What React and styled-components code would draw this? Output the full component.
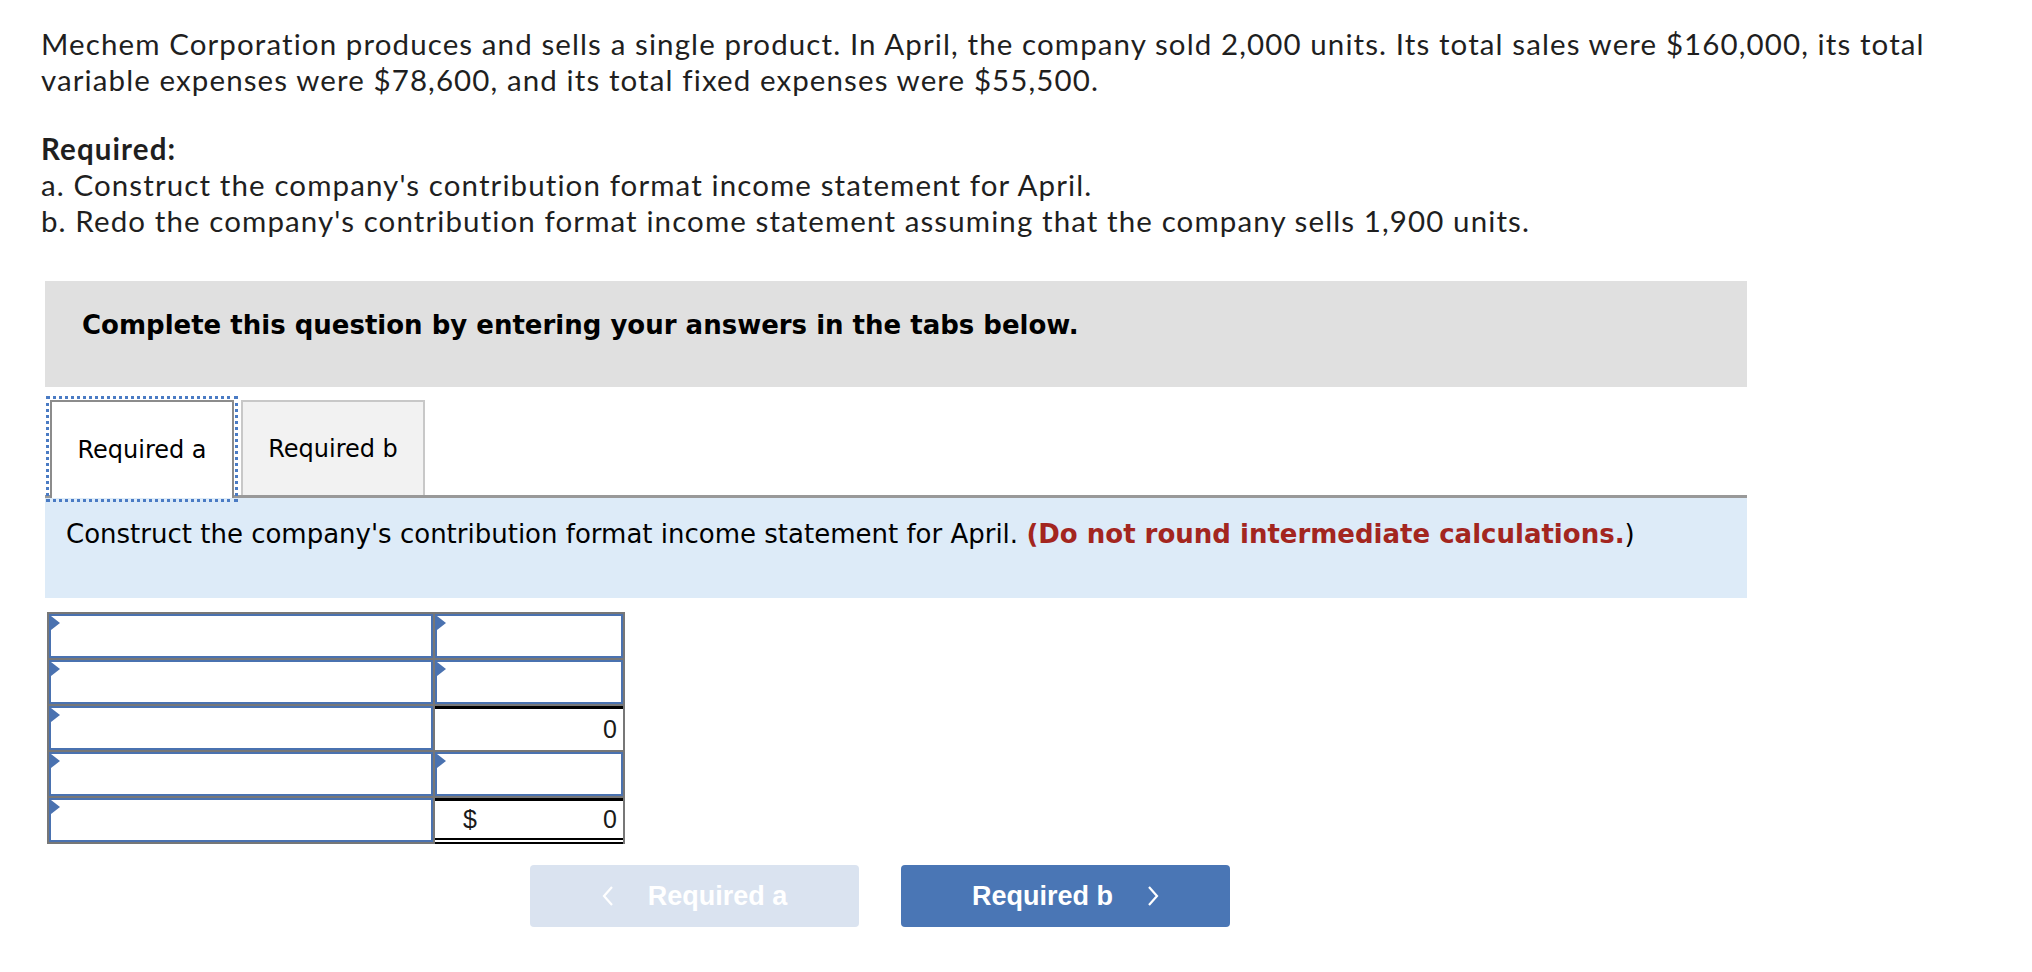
import styled, { createGlobalStyle } from "styled-components"

const Global = createGlobalStyle`
    body {
        margin: 0;
        background: #ffffff;
        color: #1f1f1f;
        font-family: Lato, "Noto Sans", sans-serif;
    }
`

const rows = [
    { label: "input", amount: "input" },
    { label: "input", amount: "input" },
    { label: "input", amount: "total" },
    { label: "input", amount: "input" },
    { label: "input", amount: "grand" },
]

export default function App() {
    return (
        <>
            <Global />
            <Page>
                <Question>
                    Mechem Corporation produces and sells a single product. In April, the company sold 2,000 units. Its total sales were $160,000, its total variable expenses were $78,600, and its total fixed expenses were $55,500.
                </Question>

                <Required>
                    <strong>Required:</strong>
                    <br />
                    a. Construct the company's contribution format income statement for April.
                    <br />
                    b. Redo the company's contribution format income statement assuming that the company sells 1,900 units.
                </Required>

                <Work>
                    <Banner>Complete this question by entering your answers in the tabs below.</Banner>

                    <Tabs>
                        <Tab $active>Required a</Tab>
                        <Tab>Required b</Tab>
                    </Tabs>

                    <Instruction>
                        Construct the company's contribution format income statement for April. <Warn>(Do not round intermediate calculations.</Warn>)
                    </Instruction>

                    <Sheet>
                        {rows.map((r, i) => (
                            <SheetRow key={i}>
                                <InputCell />
                                {r.amount === "input" && <InputCell />}
                                {r.amount === "total" && <TotalCell><span>0</span></TotalCell>}
                                {r.amount === "grand" && <TotalCell $double><span>$</span><span>0</span></TotalCell>}
                            </SheetRow>
                        ))}
                    </Sheet>

                    <Nav>
                        <NavButton disabled>
                            <Chevron viewBox="0 0 12 22"><polyline points="10,2 2,11 10,20" /></Chevron>
                            Required a
                        </NavButton>
                        <NavButton>
                            Required b
                            <Chevron viewBox="0 0 12 22"><polyline points="2,2 10,11 2,20" /></Chevron>
                        </NavButton>
                    </Nav>
                </Work>
            </Page>
        </>
    )
}

const Page = styled.div`
    padding: 26px 0 40px 41px;
`

const Question = styled.p`
    margin: 0;
    max-width: 1960px;
    font-size: 29.5px;
    letter-spacing: 1.1px;
    line-height: 36px;
`

const Required = styled.p`
    margin: 33px 0 0;
    font-size: 29.5px;
    letter-spacing: 1.1px;
    line-height: 36px;

    strong {
        font-weight: 700;
    }
`

const Work = styled.div`
    margin: 42px 0 0 4px;
    width: 1702px;
    font-family: "DejaVu Sans", Verdana, sans-serif;
    color: #000;
`

const Banner = styled.div`
    height: 106px;
    box-sizing: border-box;
    padding: 27px 37px;
    background: #e0e0e0;
    font-size: 26px;
    font-weight: 700;
    line-height: 34px;
`

const Tabs = styled.div`
    margin-top: 13px;
    display: flex;
    gap: 7px;
    padding-left: 5px;
    border-bottom: 3px solid #999999;
`

const Tab = styled.div`
    width: 184px;
    box-sizing: border-box;
    display: flex;
    align-items: center;
    justify-content: center;
    font-size: 24px;
    border: 2px solid ${p => (p.$active ? "#8c8c8c" : "#c8c8c8")};
    border-bottom: none;
    background: ${p => (p.$active ? "#ffffff" : "#f2f2f2")};
    margin-bottom: ${p => (p.$active ? "-3px" : "0")};
    height: ${p => (p.$active ? "98px" : "95px")};
    outline: ${p => (p.$active ? "3px dotted #4a7bc4" : "none")};
    outline-offset: 1px;
`

const Instruction = styled.div`
    height: 100px;
    box-sizing: border-box;
    padding: 19px 21px;
    background: #ddebf8;
    font-size: 26px;
    line-height: 34px;
`

const Warn = styled.strong`
    color: #a3261f;
    font-weight: 700;
`

const Sheet = styled.div`
    margin: 14px 0 0 2px;
    width: 578px;
    box-sizing: border-box;
    display: flex;
    flex-direction: column;
    gap: 2px;
    padding: 2px;
    background: #777777;
`

const SheetRow = styled.div`
    display: grid;
    grid-template-columns: 384px 188px;
    gap: 2px;
    height: 44px;
`

const InputCell = styled.div`
    position: relative;
    background: #ffffff;
    border: 2px solid #4a72b0;

    &::before {
        content: "";
        position: absolute;
        left: 0;
        top: 0;
        border-top: 7px solid transparent;
        border-bottom: 7px solid transparent;
        border-left: 9px solid #4a72b0;
    }
`

const TotalCell = styled.div`
    background: #ffffff;
    border-top: 3px solid #000000;
    border-bottom: ${p => (p.$double ? "6px double #000000" : "none")};
    margin-bottom: ${p => (p.$double ? "-2px" : "0")};
    display: flex;
    align-items: center;
    justify-content: ${p => (p.$double ? "space-between" : "flex-end")};
    padding: 0 6px 0 28px;
    font-family: "Liberation Sans", Arial, sans-serif;
    font-size: 25px;
    color: #1a1a1a;
`

const Nav = styled.div`
    margin-top: 21px;
    padding-left: 485px;
    display: flex;
    gap: 42px;
`

const NavButton = styled.button`
    width: 329px;
    height: 62px;
    border: none;
    border-radius: 4px;
    background: ${p => (p.disabled ? "#dae3f0" : "#4a76b5")};
    color: #ffffff;
    font-family: "Liberation Sans", Arial, sans-serif;
    font-size: 27px;
    font-weight: 700;
    display: flex;
    align-items: center;
    justify-content: center;
    gap: 34px;
    cursor: ${p => (p.disabled ? "default" : "pointer")};
`

const Chevron = styled.svg`
    width: 12px;
    height: 22px;
    fill: none;
    stroke: #ffffff;
    stroke-width: 2.2;
`
